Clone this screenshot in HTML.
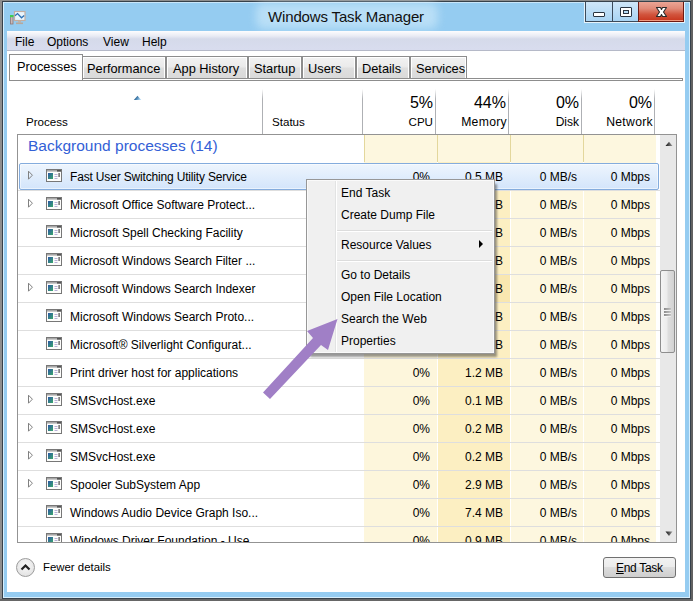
<!DOCTYPE html><html><head><meta charset="utf-8"><style>
*{margin:0;padding:0;box-sizing:border-box}
html,body{width:693px;height:601px;overflow:hidden;background:#8e8e8e;font-family:"Liberation Sans",sans-serif;font-size:12px;color:#000}
div,span{position:absolute;white-space:nowrap}
#frame{left:2px;top:1px;width:689px;height:598px;background:#95ccf1;border:1px solid #36414b}
#client{left:7px;top:31px;width:678px;height:561px;background:#fff}
#menubar{left:7px;top:31px;width:678px;height:20px;background:linear-gradient(#fdfdfe 0px,#e9ebf4 5px,#d5daea 8px,#d8dcee 18px);border-bottom:1px solid #b5b9c8}
.tab{top:56px;height:23px;border:1px solid #8d8d8d;background:linear-gradient(#f2f2f2 0%,#ebebeb 45%,#dedede 55%,#dadada 100%);box-shadow:inset 1px 1px 0 #fff,inset -1px 0 0 #fff}
.tt{top:61px;font-size:12.8px}
.hs{top:89px;height:45px;width:1px;background:linear-gradient(rgba(170,172,176,0),#aeb0b4 10px)}
.ht{text-align:right;width:100px}
.sep{left:18px;width:642px;height:1px;background:#e9e9e9}
.cell{height:28px}
.num{text-align:right;width:80px}
.mi{left:341px}
</style></head><body>
<div style="left:691px;top:0;width:2px;height:601px;background:#626262"></div><div style="left:0;top:599px;width:693px;height:2px;background:#666"></div>
<div id="frame"></div><div id="client"></div>
<div style="left:3px;top:2px;width:687px;height:1px;background:#c9e6fa"></div>
<div style="left:3px;top:2px;width:1px;height:595px;background:#d7eefc"></div>
<div style="left:689px;top:2px;width:1px;height:595px;background:#d7eefc"></div>
<div style="left:3px;top:597px;width:687px;height:1px;background:#d7eefc"></div>
<div style="left:256px;top:3px;width:182px;height:26px;background:rgba(215,238,252,.55);filter:blur(4px);border-radius:8px"></div>
<div style="left:268px;top:8px;font-size:15px;color:#111;letter-spacing:-0.15px">Windows Task Manager</div>
<div id="menubar"></div>
<div style="left:15px;top:35px">File</div>
<div style="left:47px;top:35px">Options</div>
<div style="left:103px;top:35px">View</div>
<div style="left:142px;top:35px">Help</div>
<div class="tab" style="left:82px;width:84px"></div>
<div class="tt" style="left:87px;top:61px">Performance</div>
<div class="tab" style="left:166px;width:82px"></div>
<div class="tt" style="left:173px;top:61px">App History</div>
<div class="tab" style="left:248px;width:54px"></div>
<div class="tt" style="left:254px;top:61px">Startup</div>
<div class="tab" style="left:302px;width:54px"></div>
<div class="tt" style="left:308px;top:61px">Users</div>
<div class="tab" style="left:356px;width:54px"></div>
<div class="tt" style="left:362px;top:61px">Details</div>
<div class="tab" style="left:410px;width:57px"></div>
<div class="tt" style="left:416px;top:61px">Services</div>
<div style="left:9px;top:54px;width:74px;height:27px;border:1px solid #8d8d8d;border-bottom:none;background:#fff"></div>
<div class="tt" style="left:17px;top:59px">Processes</div>
<div style="left:9px;top:80px;width:674px;height:1px;background:#8d8d8d"></div>
<div style="left:466px;top:78px;width:217px;height:3px;border:1px solid #8d8d8d;border-left:none"></div>
<div class="hs" style="left:262px"></div>
<div class="hs" style="left:362px"></div>
<div class="hs" style="left:435px"></div>
<div class="hs" style="left:508px"></div>
<div class="hs" style="left:581px"></div>
<div class="hs" style="left:654px"></div>
<div style="left:26px;top:115px;font-size:11.6px">Process</div>
<div style="left:272px;top:115px;font-size:11.6px">Status</div>
<div class="ht" style="left:333px;top:94px;font-size:16px">5%</div>
<div class="ht" style="left:333px;top:115px;font-size:11.6px;">CPU</div>
<div class="ht" style="left:406px;top:94px;font-size:16px">44%</div>
<div class="ht" style="left:406px;top:115px;font-size:11.6px;font-size:12.2px;letter-spacing:.3px;margin-left:1px">Memory</div>
<div class="ht" style="left:479px;top:94px;font-size:16px">0%</div>
<div class="ht" style="left:479px;top:115px;font-size:11.6px;font-size:12px">Disk</div>
<div class="ht" style="left:552px;top:94px;font-size:16px">0%</div>
<div class="ht" style="left:552px;top:115px;font-size:11.6px;font-size:12.2px;letter-spacing:.3px;margin-left:1px">Network</div>
<svg style="position:absolute;left:133px;top:95px" width="9" height="6"><defs><linearGradient id="sa" x1="0" y1="0" x2="1" y2="0.4"><stop offset="0" stop-color="#2a3a48"/><stop offset="0.5" stop-color="#3c78a8"/><stop offset="1" stop-color="#a9d3f2"/></linearGradient></defs><path d="M0.8 5L4.5 0.8L8.2 5Z" fill="url(#sa)"/></svg>
<div style="left:17px;top:134px;width:660px;height:409px;border:1px solid #939393"></div>
<div style="left:364px;top:135px;width:73px;height:27px;background:#fdf7df;border-left:1px solid #e3d79c"></div>
<div style="left:437px;top:135px;width:73px;height:27px;background:#fdf7df;border-left:1px solid #e3d79c"></div>
<div style="left:510px;top:135px;width:73px;height:27px;background:#fdf7df;border-left:1px solid #e3d79c"></div>
<div style="left:583px;top:135px;width:73px;height:27px;background:#fdf7df;border-left:1px solid #e3d79c"></div>
<div style="left:364px;top:162px;width:73px;height:380px;background:#fdf6dc"></div>
<div style="left:438px;top:162px;width:72px;height:380px;background:#fcefc2"></div>
<div style="left:511px;top:162px;width:72px;height:380px;background:#fdf7df"></div>
<div style="left:584px;top:162px;width:72px;height:380px;background:#fdf7df"></div>
<div style="left:438px;top:275px;width:72px;height:27px;background:#f9e7b0"></div>
<div style="left:28px;top:137px;font-size:15.5px;color:#3360d6">Background processes (14)</div>
<div style="left:18px;top:135px;width:658px;height:407px;overflow:hidden">
<div style="left:1px;top:28px;width:640px;height:27px;border:1px solid #84acdd;border-radius:2px;background:linear-gradient(#eef5fd,#d3e5fb);box-shadow:inset 0 0 0 1px rgba(255,255,255,.5)"></div>
<svg style="position:absolute;left:9px;top:35px" width="7" height="11"><path d="M1.5 1.2L5.4 5.2L1.5 9.2Z" fill="none" stroke="#808080" stroke-width="1" stroke-linejoin="round"/></svg>
<svg style="position:absolute;left:28px;top:34px" width="16" height="13"><defs><linearGradient id="g0" x1="0" y1="0" x2="1" y2="1"><stop offset="0" stop-color="#2b55a8"/><stop offset="1" stop-color="#3aa86a"/></linearGradient></defs><rect x="0.5" y="0.5" width="15" height="12" fill="#fdfdfb" stroke="#777"/><rect x="1" y="1" width="14" height="1.6" fill="#a8a8a8"/><rect x="11" y="1" width="4" height="1.6" fill="#555"/><rect x="2" y="4" width="5" height="6" fill="url(#g0)"/><path d="M8.5 5.5h3M8.5 7.5h3M8.5 9.5h3" stroke="#b8b0d8" stroke-width="1"/><rect x="12.5" y="4" width="1.2" height="4" fill="#4a4a4a"/></svg>
<div style="left:52px;top:35px"><span style="position:static;letter-spacing:-0.17px">Fast User Switching Utility Service</span></div>
<div class="num" style="left:332px;top:35px">0%</div>
<div class="num" style="left:405px;top:35px">0.5 MB</div>
<div class="num" style="left:479px;top:35px">0 MB/s</div>
<div class="num" style="left:552px;top:35px">0 Mbps</div>
<div style="left:0;top:55px;width:642px;height:1px;background:#dedede"></div>
<svg style="position:absolute;left:9px;top:63px" width="7" height="11"><path d="M1.5 1.2L5.4 5.2L1.5 9.2Z" fill="none" stroke="#808080" stroke-width="1" stroke-linejoin="round"/></svg>
<svg style="position:absolute;left:28px;top:62px" width="16" height="13"><defs><linearGradient id="g1" x1="0" y1="0" x2="1" y2="1"><stop offset="0" stop-color="#2b55a8"/><stop offset="1" stop-color="#3aa86a"/></linearGradient></defs><rect x="0.5" y="0.5" width="15" height="12" fill="#fdfdfb" stroke="#777"/><rect x="1" y="1" width="14" height="1.6" fill="#a8a8a8"/><rect x="11" y="1" width="4" height="1.6" fill="#555"/><rect x="2" y="4" width="5" height="6" fill="url(#g1)"/><path d="M8.5 5.5h3M8.5 7.5h3M8.5 9.5h3" stroke="#b8b0d8" stroke-width="1"/><rect x="12.5" y="4" width="1.2" height="4" fill="#4a4a4a"/></svg>
<div style="left:52px;top:63px">Microsoft Office Software Protect...</div>
<div class="num" style="left:332px;top:63px">0%</div>
<div class="num" style="left:405px;top:63px">0.4 MB</div>
<div class="num" style="left:479px;top:63px">0 MB/s</div>
<div class="num" style="left:552px;top:63px">0 Mbps</div>
<div style="left:0;top:83px;width:642px;height:1px;background:#dedede"></div>
<svg style="position:absolute;left:28px;top:90px" width="16" height="13"><defs><linearGradient id="g2" x1="0" y1="0" x2="1" y2="1"><stop offset="0" stop-color="#2b55a8"/><stop offset="1" stop-color="#3aa86a"/></linearGradient></defs><rect x="0.5" y="0.5" width="15" height="12" fill="#fdfdfb" stroke="#777"/><rect x="1" y="1" width="14" height="1.6" fill="#a8a8a8"/><rect x="11" y="1" width="4" height="1.6" fill="#555"/><rect x="2" y="4" width="5" height="6" fill="url(#g2)"/><path d="M8.5 5.5h3M8.5 7.5h3M8.5 9.5h3" stroke="#b8b0d8" stroke-width="1"/><rect x="12.5" y="4" width="1.2" height="4" fill="#4a4a4a"/></svg>
<div style="left:52px;top:91px">Microsoft Spell Checking Facility</div>
<div class="num" style="left:332px;top:91px">0%</div>
<div class="num" style="left:405px;top:91px">0.4 MB</div>
<div class="num" style="left:479px;top:91px">0 MB/s</div>
<div class="num" style="left:552px;top:91px">0 Mbps</div>
<div style="left:0;top:111px;width:642px;height:1px;background:#dedede"></div>
<svg style="position:absolute;left:28px;top:118px" width="16" height="13"><defs><linearGradient id="g3" x1="0" y1="0" x2="1" y2="1"><stop offset="0" stop-color="#2b55a8"/><stop offset="1" stop-color="#3aa86a"/></linearGradient></defs><rect x="0.5" y="0.5" width="15" height="12" fill="#fdfdfb" stroke="#777"/><rect x="1" y="1" width="14" height="1.6" fill="#a8a8a8"/><rect x="11" y="1" width="4" height="1.6" fill="#555"/><rect x="2" y="4" width="5" height="6" fill="url(#g3)"/><path d="M8.5 5.5h3M8.5 7.5h3M8.5 9.5h3" stroke="#b8b0d8" stroke-width="1"/><rect x="12.5" y="4" width="1.2" height="4" fill="#4a4a4a"/></svg>
<div style="left:52px;top:119px">Microsoft Windows Search Filter ...</div>
<div class="num" style="left:332px;top:119px">0%</div>
<div class="num" style="left:405px;top:119px">0.4 MB</div>
<div class="num" style="left:479px;top:119px">0 MB/s</div>
<div class="num" style="left:552px;top:119px">0 Mbps</div>
<div style="left:0;top:139px;width:642px;height:1px;background:#dedede"></div>
<svg style="position:absolute;left:9px;top:147px" width="7" height="11"><path d="M1.5 1.2L5.4 5.2L1.5 9.2Z" fill="none" stroke="#808080" stroke-width="1" stroke-linejoin="round"/></svg>
<svg style="position:absolute;left:28px;top:146px" width="16" height="13"><defs><linearGradient id="g4" x1="0" y1="0" x2="1" y2="1"><stop offset="0" stop-color="#2b55a8"/><stop offset="1" stop-color="#3aa86a"/></linearGradient></defs><rect x="0.5" y="0.5" width="15" height="12" fill="#fdfdfb" stroke="#777"/><rect x="1" y="1" width="14" height="1.6" fill="#a8a8a8"/><rect x="11" y="1" width="4" height="1.6" fill="#555"/><rect x="2" y="4" width="5" height="6" fill="url(#g4)"/><path d="M8.5 5.5h3M8.5 7.5h3M8.5 9.5h3" stroke="#b8b0d8" stroke-width="1"/><rect x="12.5" y="4" width="1.2" height="4" fill="#4a4a4a"/></svg>
<div style="left:52px;top:147px">Microsoft Windows Search Indexer</div>
<div class="num" style="left:332px;top:147px">0%</div>
<div class="num" style="left:405px;top:147px">8.4 MB</div>
<div class="num" style="left:479px;top:147px">0 MB/s</div>
<div class="num" style="left:552px;top:147px">0 Mbps</div>
<div style="left:0;top:167px;width:642px;height:1px;background:#dedede"></div>
<svg style="position:absolute;left:28px;top:174px" width="16" height="13"><defs><linearGradient id="g5" x1="0" y1="0" x2="1" y2="1"><stop offset="0" stop-color="#2b55a8"/><stop offset="1" stop-color="#3aa86a"/></linearGradient></defs><rect x="0.5" y="0.5" width="15" height="12" fill="#fdfdfb" stroke="#777"/><rect x="1" y="1" width="14" height="1.6" fill="#a8a8a8"/><rect x="11" y="1" width="4" height="1.6" fill="#555"/><rect x="2" y="4" width="5" height="6" fill="url(#g5)"/><path d="M8.5 5.5h3M8.5 7.5h3M8.5 9.5h3" stroke="#b8b0d8" stroke-width="1"/><rect x="12.5" y="4" width="1.2" height="4" fill="#4a4a4a"/></svg>
<div style="left:52px;top:175px">Microsoft Windows Search Proto...</div>
<div class="num" style="left:332px;top:175px">0%</div>
<div class="num" style="left:405px;top:175px">0.4 MB</div>
<div class="num" style="left:479px;top:175px">0 MB/s</div>
<div class="num" style="left:552px;top:175px">0 Mbps</div>
<div style="left:0;top:195px;width:642px;height:1px;background:#dedede"></div>
<svg style="position:absolute;left:28px;top:202px" width="16" height="13"><defs><linearGradient id="g6" x1="0" y1="0" x2="1" y2="1"><stop offset="0" stop-color="#2b55a8"/><stop offset="1" stop-color="#3aa86a"/></linearGradient></defs><rect x="0.5" y="0.5" width="15" height="12" fill="#fdfdfb" stroke="#777"/><rect x="1" y="1" width="14" height="1.6" fill="#a8a8a8"/><rect x="11" y="1" width="4" height="1.6" fill="#555"/><rect x="2" y="4" width="5" height="6" fill="url(#g6)"/><path d="M8.5 5.5h3M8.5 7.5h3M8.5 9.5h3" stroke="#b8b0d8" stroke-width="1"/><rect x="12.5" y="4" width="1.2" height="4" fill="#4a4a4a"/></svg>
<div style="left:52px;top:203px">Microsoft&reg; Silverlight Configurat...</div>
<div class="num" style="left:332px;top:203px">0%</div>
<div class="num" style="left:405px;top:203px">0.4 MB</div>
<div class="num" style="left:479px;top:203px">0 MB/s</div>
<div class="num" style="left:552px;top:203px">0 Mbps</div>
<div style="left:0;top:223px;width:642px;height:1px;background:#dedede"></div>
<svg style="position:absolute;left:28px;top:230px" width="16" height="13"><defs><linearGradient id="g7" x1="0" y1="0" x2="1" y2="1"><stop offset="0" stop-color="#2b55a8"/><stop offset="1" stop-color="#3aa86a"/></linearGradient></defs><rect x="0.5" y="0.5" width="15" height="12" fill="#fdfdfb" stroke="#777"/><rect x="1" y="1" width="14" height="1.6" fill="#a8a8a8"/><rect x="11" y="1" width="4" height="1.6" fill="#555"/><rect x="2" y="4" width="5" height="6" fill="url(#g7)"/><path d="M8.5 5.5h3M8.5 7.5h3M8.5 9.5h3" stroke="#b8b0d8" stroke-width="1"/><rect x="12.5" y="4" width="1.2" height="4" fill="#4a4a4a"/></svg>
<div style="left:52px;top:231px">Print driver host for applications</div>
<div class="num" style="left:332px;top:231px">0%</div>
<div class="num" style="left:405px;top:231px">1.2 MB</div>
<div class="num" style="left:479px;top:231px">0 MB/s</div>
<div class="num" style="left:552px;top:231px">0 Mbps</div>
<div style="left:0;top:251px;width:642px;height:1px;background:#dedede"></div>
<svg style="position:absolute;left:9px;top:259px" width="7" height="11"><path d="M1.5 1.2L5.4 5.2L1.5 9.2Z" fill="none" stroke="#808080" stroke-width="1" stroke-linejoin="round"/></svg>
<svg style="position:absolute;left:28px;top:258px" width="16" height="13"><defs><linearGradient id="g8" x1="0" y1="0" x2="1" y2="1"><stop offset="0" stop-color="#2b55a8"/><stop offset="1" stop-color="#3aa86a"/></linearGradient></defs><rect x="0.5" y="0.5" width="15" height="12" fill="#fdfdfb" stroke="#777"/><rect x="1" y="1" width="14" height="1.6" fill="#a8a8a8"/><rect x="11" y="1" width="4" height="1.6" fill="#555"/><rect x="2" y="4" width="5" height="6" fill="url(#g8)"/><path d="M8.5 5.5h3M8.5 7.5h3M8.5 9.5h3" stroke="#b8b0d8" stroke-width="1"/><rect x="12.5" y="4" width="1.2" height="4" fill="#4a4a4a"/></svg>
<div style="left:52px;top:259px">SMSvcHost.exe</div>
<div class="num" style="left:332px;top:259px">0%</div>
<div class="num" style="left:405px;top:259px">0.1 MB</div>
<div class="num" style="left:479px;top:259px">0 MB/s</div>
<div class="num" style="left:552px;top:259px">0 Mbps</div>
<div style="left:0;top:279px;width:642px;height:1px;background:#dedede"></div>
<svg style="position:absolute;left:9px;top:287px" width="7" height="11"><path d="M1.5 1.2L5.4 5.2L1.5 9.2Z" fill="none" stroke="#808080" stroke-width="1" stroke-linejoin="round"/></svg>
<svg style="position:absolute;left:28px;top:286px" width="16" height="13"><defs><linearGradient id="g9" x1="0" y1="0" x2="1" y2="1"><stop offset="0" stop-color="#2b55a8"/><stop offset="1" stop-color="#3aa86a"/></linearGradient></defs><rect x="0.5" y="0.5" width="15" height="12" fill="#fdfdfb" stroke="#777"/><rect x="1" y="1" width="14" height="1.6" fill="#a8a8a8"/><rect x="11" y="1" width="4" height="1.6" fill="#555"/><rect x="2" y="4" width="5" height="6" fill="url(#g9)"/><path d="M8.5 5.5h3M8.5 7.5h3M8.5 9.5h3" stroke="#b8b0d8" stroke-width="1"/><rect x="12.5" y="4" width="1.2" height="4" fill="#4a4a4a"/></svg>
<div style="left:52px;top:287px">SMSvcHost.exe</div>
<div class="num" style="left:332px;top:287px">0%</div>
<div class="num" style="left:405px;top:287px">0.2 MB</div>
<div class="num" style="left:479px;top:287px">0 MB/s</div>
<div class="num" style="left:552px;top:287px">0 Mbps</div>
<div style="left:0;top:307px;width:642px;height:1px;background:#dedede"></div>
<svg style="position:absolute;left:9px;top:315px" width="7" height="11"><path d="M1.5 1.2L5.4 5.2L1.5 9.2Z" fill="none" stroke="#808080" stroke-width="1" stroke-linejoin="round"/></svg>
<svg style="position:absolute;left:28px;top:314px" width="16" height="13"><defs><linearGradient id="g10" x1="0" y1="0" x2="1" y2="1"><stop offset="0" stop-color="#2b55a8"/><stop offset="1" stop-color="#3aa86a"/></linearGradient></defs><rect x="0.5" y="0.5" width="15" height="12" fill="#fdfdfb" stroke="#777"/><rect x="1" y="1" width="14" height="1.6" fill="#a8a8a8"/><rect x="11" y="1" width="4" height="1.6" fill="#555"/><rect x="2" y="4" width="5" height="6" fill="url(#g10)"/><path d="M8.5 5.5h3M8.5 7.5h3M8.5 9.5h3" stroke="#b8b0d8" stroke-width="1"/><rect x="12.5" y="4" width="1.2" height="4" fill="#4a4a4a"/></svg>
<div style="left:52px;top:315px">SMSvcHost.exe</div>
<div class="num" style="left:332px;top:315px">0%</div>
<div class="num" style="left:405px;top:315px">0.2 MB</div>
<div class="num" style="left:479px;top:315px">0 MB/s</div>
<div class="num" style="left:552px;top:315px">0 Mbps</div>
<div style="left:0;top:335px;width:642px;height:1px;background:#dedede"></div>
<svg style="position:absolute;left:9px;top:343px" width="7" height="11"><path d="M1.5 1.2L5.4 5.2L1.5 9.2Z" fill="none" stroke="#808080" stroke-width="1" stroke-linejoin="round"/></svg>
<svg style="position:absolute;left:28px;top:342px" width="16" height="13"><defs><linearGradient id="g11" x1="0" y1="0" x2="1" y2="1"><stop offset="0" stop-color="#2b55a8"/><stop offset="1" stop-color="#3aa86a"/></linearGradient></defs><rect x="0.5" y="0.5" width="15" height="12" fill="#fdfdfb" stroke="#777"/><rect x="1" y="1" width="14" height="1.6" fill="#a8a8a8"/><rect x="11" y="1" width="4" height="1.6" fill="#555"/><rect x="2" y="4" width="5" height="6" fill="url(#g11)"/><path d="M8.5 5.5h3M8.5 7.5h3M8.5 9.5h3" stroke="#b8b0d8" stroke-width="1"/><rect x="12.5" y="4" width="1.2" height="4" fill="#4a4a4a"/></svg>
<div style="left:52px;top:343px">Spooler SubSystem App</div>
<div class="num" style="left:332px;top:343px">0%</div>
<div class="num" style="left:405px;top:343px">2.9 MB</div>
<div class="num" style="left:479px;top:343px">0 MB/s</div>
<div class="num" style="left:552px;top:343px">0 Mbps</div>
<div style="left:0;top:363px;width:642px;height:1px;background:#dedede"></div>
<svg style="position:absolute;left:28px;top:370px" width="16" height="13"><defs><linearGradient id="g12" x1="0" y1="0" x2="1" y2="1"><stop offset="0" stop-color="#2b55a8"/><stop offset="1" stop-color="#3aa86a"/></linearGradient></defs><rect x="0.5" y="0.5" width="15" height="12" fill="#fdfdfb" stroke="#777"/><rect x="1" y="1" width="14" height="1.6" fill="#a8a8a8"/><rect x="11" y="1" width="4" height="1.6" fill="#555"/><rect x="2" y="4" width="5" height="6" fill="url(#g12)"/><path d="M8.5 5.5h3M8.5 7.5h3M8.5 9.5h3" stroke="#b8b0d8" stroke-width="1"/><rect x="12.5" y="4" width="1.2" height="4" fill="#4a4a4a"/></svg>
<div style="left:52px;top:371px">Windows Audio Device Graph Iso...</div>
<div class="num" style="left:332px;top:371px">0%</div>
<div class="num" style="left:405px;top:371px">7.4 MB</div>
<div class="num" style="left:479px;top:371px">0 MB/s</div>
<div class="num" style="left:552px;top:371px">0 Mbps</div>
<div style="left:0;top:391px;width:642px;height:1px;background:#dedede"></div>
<svg style="position:absolute;left:28px;top:398px" width="16" height="13"><defs><linearGradient id="g13" x1="0" y1="0" x2="1" y2="1"><stop offset="0" stop-color="#2b55a8"/><stop offset="1" stop-color="#3aa86a"/></linearGradient></defs><rect x="0.5" y="0.5" width="15" height="12" fill="#fdfdfb" stroke="#777"/><rect x="1" y="1" width="14" height="1.6" fill="#a8a8a8"/><rect x="11" y="1" width="4" height="1.6" fill="#555"/><rect x="2" y="4" width="5" height="6" fill="url(#g13)"/><path d="M8.5 5.5h3M8.5 7.5h3M8.5 9.5h3" stroke="#b8b0d8" stroke-width="1"/><rect x="12.5" y="4" width="1.2" height="4" fill="#4a4a4a"/></svg>
<div style="left:52px;top:399px">Windows Driver Foundation - Use...</div>
<div class="num" style="left:332px;top:399px">0%</div>
<div class="num" style="left:405px;top:399px">0.9 MB</div>
<div class="num" style="left:479px;top:399px">0 MB/s</div>
<div class="num" style="left:552px;top:399px">0 Mbps</div>
</div>
<div style="left:660px;top:135px;width:16px;height:407px;background:#e8e8e8"></div>
<svg style="position:absolute;left:665px;top:141px" width="9" height="5"><defs><linearGradient id="ar" x1="0" x2="1"><stop offset="0" stop-color="#111"/><stop offset="1" stop-color="#999"/></linearGradient></defs><path d="M0.5 5L4 0.8L7.5 5Z" fill="url(#ar)"/></svg>
<svg style="position:absolute;left:665px;top:531px" width="9" height="5"><path d="M0.5 0.5L7.5 0.5L4 5Z" fill="url(#ar)"/></svg>
<div style="left:660px;top:270px;width:15px;height:83px;border:1px solid #8e8e8e;border-radius:2px;background:linear-gradient(90deg,#f4f4f4 0%,#ececec 45%,#dedede 55%,#d2d2d2 100%)"></div>
<svg style="position:absolute;left:664px;top:307px" width="8" height="10"><defs><linearGradient id="gr" x1="0" x2="1"><stop offset="0" stop-color="#222"/><stop offset="1" stop-color="#aaa"/></linearGradient></defs><path d="M0 3h7M0 6h7M0 9h7" stroke="#fff" stroke-width="1"/><path d="M0 2h7M0 5h7M0 8h7" stroke="url(#gr)" stroke-width="1.1"/></svg>
<div style="left:310px;top:184px;width:187px;height:173px;background:rgba(50,50,50,.5);filter:blur(1px)"></div>
<div style="left:306px;top:179px;width:189px;height:175px;background:#f0f0f0;border:1px solid #979797;box-shadow:inset 1px 1px 0 #fafafa,inset -1px -1px 0 #fafafa"></div>
<div style="left:335px;top:181px;width:2px;height:171px;background:#e2e3e3;border-right:1px solid #fff"></div>
<div class="mi" style="top:186px">End Task</div>
<div class="mi" style="top:208px">Create Dump File</div>
<div class="mi" style="top:238px">Resource Values</div>
<div class="mi" style="top:268px">Go to Details</div>
<div class="mi" style="top:290px">Open File Location</div>
<div class="mi" style="top:312px">Search the Web</div>
<div class="mi" style="top:334px">Properties</div>
<div style="left:337px;top:230px;width:155px;height:2px;background:#fff;border-top:1px solid #dcdcdc"></div>
<div style="left:337px;top:260px;width:155px;height:2px;background:#fff;border-top:1px solid #dcdcdc"></div>
<svg style="position:absolute;left:479px;top:240px" width="5" height="8"><path d="M0 0L4 4L0 8Z" fill="#000"/></svg>
<svg style="position:absolute;left:0;top:0" width="693" height="601"><path d="M337.5 319 L307 331 L313 338 L263 392.5 L270 399 L321 345 L328 350 Z" fill="#a07fc6"/></svg>
<div style="left:16px;top:558px;width:19px;height:19px;border-radius:50%;border:1px solid #9c9c9c;background:radial-gradient(circle at 50% 40%,#fafafa,#dcdcdc)"></div>
<svg style="position:absolute;left:20px;top:563px" width="11" height="8"><path d="M1.5 6.5L5.5 2.5L9.5 6.5" fill="none" stroke="#222" stroke-width="2.2"/></svg>
<div style="left:43px;top:561px;font-size:11.4px">Fewer details</div>
<div style="left:603px;top:557px;width:73px;height:21px;border:1px solid #707070;border-radius:3px;background:linear-gradient(#f2f2f2 0%,#ebebeb 50%,#dddddd 50%,#cfcfcf 100%)"></div>
<div style="left:616px;top:561px;font-size:12px;letter-spacing:-0.3px"><u>E</u>nd Task</div>
<div style="left:584px;top:2px;width:101px;height:21px;background:#e6f3fb"></div>
<div style="left:585px;top:2px;width:28px;height:20px;border:1px solid #3c4a5a;border-top:none;background:linear-gradient(#cfe6f8,#a9d4f3)"></div>
<div style="left:612px;top:2px;width:27px;height:20px;border:1px solid #3c4a5a;border-top:none;background:linear-gradient(#cfe6f8,#a9d4f3)"></div>
<div style="left:638px;top:2px;width:46px;height:20px;border:1px solid #6e1a12;border-top:none;background:linear-gradient(#eaa596 0%,#e08a78 35%,#d2553e 65%,#c8341c 100%);box-shadow:inset 0 -1px 0 #f09a80"></div>
<div style="left:593px;top:12px;width:12px;height:5px;border:1px solid #2a3440;border-radius:1px;background:#fff"></div>
<div style="left:620px;top:7px;width:12px;height:10px;border:1px solid #2a3440;border-radius:1px;background:#fff"></div>
<div style="left:623px;top:10px;width:6px;height:4px;border:1px solid #2a3440;background:#b6dcf6"></div>
<svg style="position:absolute;left:650px;top:2px" width="22" height="20"><path d="M6.5 5.5H10.5L11.5 7.5L12.5 5.5H16.5L13.5 10L16.5 14.5H12.5L11.5 12.5L10.5 14.5H6.5L9.5 10Z" fill="#fff" stroke="#2a2a2a" stroke-width="1.1" stroke-linejoin="round"/></svg>
<svg style="position:absolute;left:6px;top:6px" width="24" height="22"><rect x="4.5" y="9.5" width="2.5" height="8.5" fill="#c9b8b8" stroke="#8e7878" stroke-width="0.8"/><rect x="4" y="9" width="3.5" height="2.2" fill="#3fcf4f"/><rect x="8.5" y="5.5" width="10.5" height="9" fill="#e9f5fd" stroke="#c3aea2" stroke-width="1.2"/><path d="M9 9.8L11.5 7.6L15.5 11.8L18.2 9.5" fill="none" stroke="#2e72b5" stroke-width="1.3"/><rect x="12" y="15" width="3" height="1.5" fill="#c0b4aa"/><rect x="10" y="16.5" width="7" height="1.6" fill="#b8a89c"/></svg>
</body></html>
